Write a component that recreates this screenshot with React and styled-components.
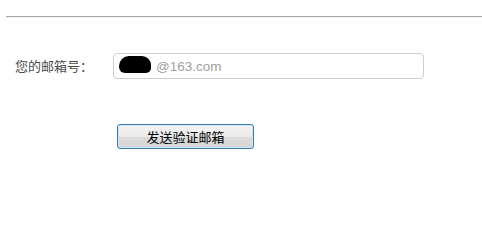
import React from "react";
import styled, { createGlobalStyle } from "styled-components";

const Global = createGlobalStyle`
  html, body { margin: 0; padding: 0; background: #fff; }
  body { font-family: "Noto Sans CJK SC", "Liberation Sans", sans-serif; }
`;

const Page = styled.div`
  width: 482px;
  height: 212px;
  padding-top: 16px;
  box-sizing: border-box;
`;

const Divider = styled.div`
  margin-left: 6px;
  height: 0;
  border-top: 1px solid #a9a9a9;
  border-bottom: 1px solid #f0f0f0;
`;

const Form = styled.div`
  padding: 35px 0 0 15px;
  display: flex;
  flex-direction: column;
`;

const Row = styled.div`
  display: flex;
  align-items: center;
`;

const Label = styled.label`
  width: 98px;
  font-size: 13px;
  color: #4a4a4a;
  font-family: "Noto Sans CJK SC", sans-serif;
  line-height: 26px;
`;

const InputBox = styled.div`
  width: 311px;
  height: 26px;
  box-sizing: border-box;
  border: 1px solid #cfcfcf;
  border-radius: 4px;
  display: flex;
  align-items: center;
  padding-left: 5px;
  gap: 5px;
`;

const Redact = styled.span`
  display: inline-block;
  width: 32px;
  height: 17px;
  background: #000;
  border-radius: 10px 9px 5px 6px;
  margin-top: -3px;
`;

const Domain = styled.span`
  font-family: "Liberation Sans", Arial, sans-serif;
  font-size: 13.5px;
  color: #a0a0a0;
`;

const ButtonRow = styled.div`
  margin-top: 44px;
  padding-left: 102px;
`;

const Button = styled.button`
  width: 137px;
  height: 25px;
  box-sizing: border-box;
  border: 1px solid #3d7bad;
  border-radius: 3px;
  box-shadow: inset 0 0 0 1px #cfe8f5;
  background: linear-gradient(#f3f3f3 0%, #ebebeb 50%, #dcdcdc 51%, #d6d6d6 100%);
  font-family: "Noto Sans CJK SC", sans-serif;
  font-size: 13px;
  color: #000;
  padding: 0;
  line-height: 23px;
  cursor: pointer;
`;

export default function App() {
  return (
    <Page>
      <Global />
      <Divider />
      <Form>
        <Row>
          <Label>您的邮箱号：</Label>
          <InputBox>
            <Redact />
            <Domain>@163.com</Domain>
          </InputBox>
        </Row>
        <ButtonRow>
          <Button>发送验证邮箱</Button>
        </ButtonRow>
      </Form>
    </Page>
  );
}
